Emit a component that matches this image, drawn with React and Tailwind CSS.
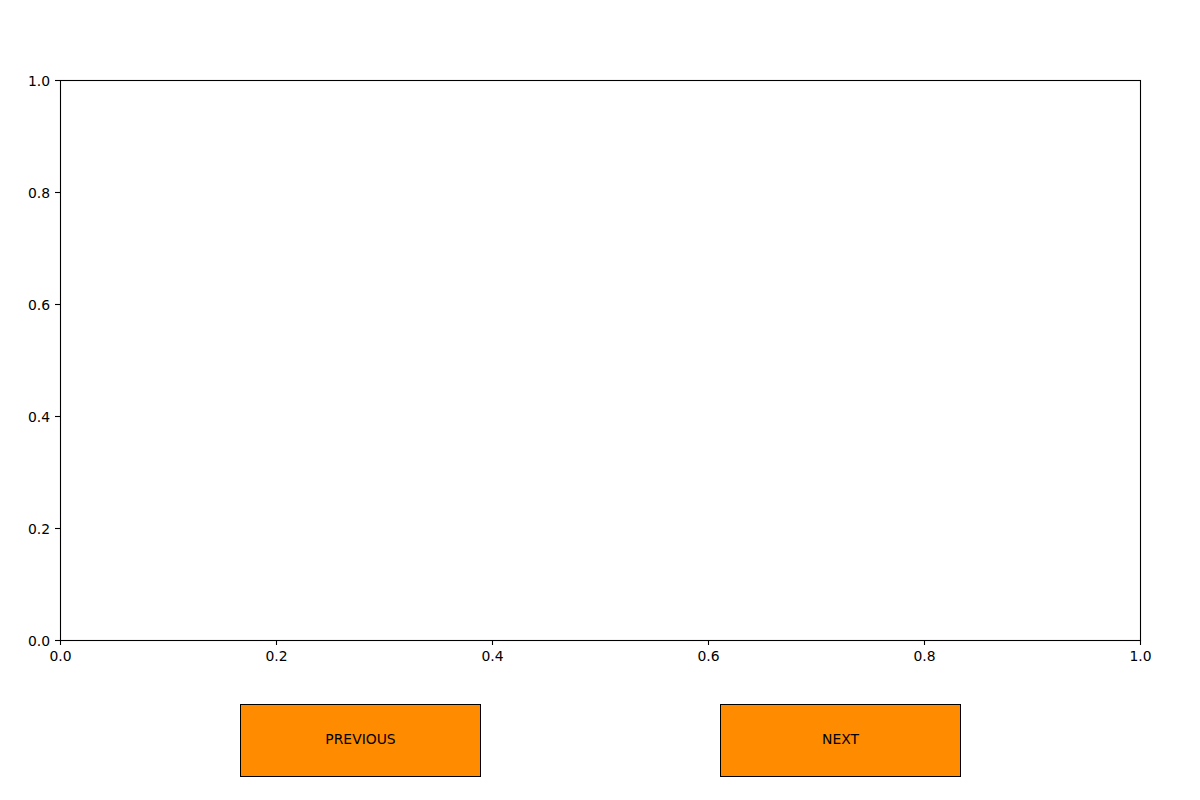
const ticks = [0, 0.2, 0.4, 0.6, 0.8, 1.0]

function Axes() {
    const left = 60, right = 1140, top = 80, bottom = 640
    const w = right - left
    const h = bottom - top
    return (
        <svg width="1200" height="680" className="block" fontFamily="'DejaVu Sans', sans-serif" fontSize="13.9">
            <rect x={left + 0.5} y={top + 0.5} width={w} height={h} fill="none" stroke="#000" strokeWidth="1.1" />
            {ticks.map((t, i) => {
                const x = left + t * w + 0.5
                const y = bottom - t * h + 0.5
                return (
                    <g key={i}>
                        <line x1={x} y1={bottom} x2={x} y2={bottom + 5} stroke="#000" strokeWidth="1.1" />
                        <text x={x} y={bottom + 21} textAnchor="middle" fill="#000">{t.toFixed(1)}</text>
                        <line x1={left - 5} y1={y} x2={left} y2={y} stroke="#000" strokeWidth="1.1" />
                        <text x={left - 10} y={y + 5} textAnchor="end" fill="#000">{t.toFixed(1)}</text>
                    </g>
                )
            })}
        </svg>
    )
}

function Btn({ label }) {
    return (
        <button className="w-[241px] h-[73px] bg-[#ff8c00] border border-black flex items-center justify-center pb-[2px] text-[13.9px] text-black">
            {label}
        </button>
    )
}

export default function App() {
    return (
        <div className="w-[1200px] h-[800px] bg-white overflow-hidden" style={{ fontFamily: "'DejaVu Sans', sans-serif" }}>
            <Axes />
            <div className="flex gap-[239px] pl-[240px] mt-[24px]">
                <Btn label="PREVIOUS" />
                <Btn label="NEXT" />
            </div>
        </div>
    )
}
